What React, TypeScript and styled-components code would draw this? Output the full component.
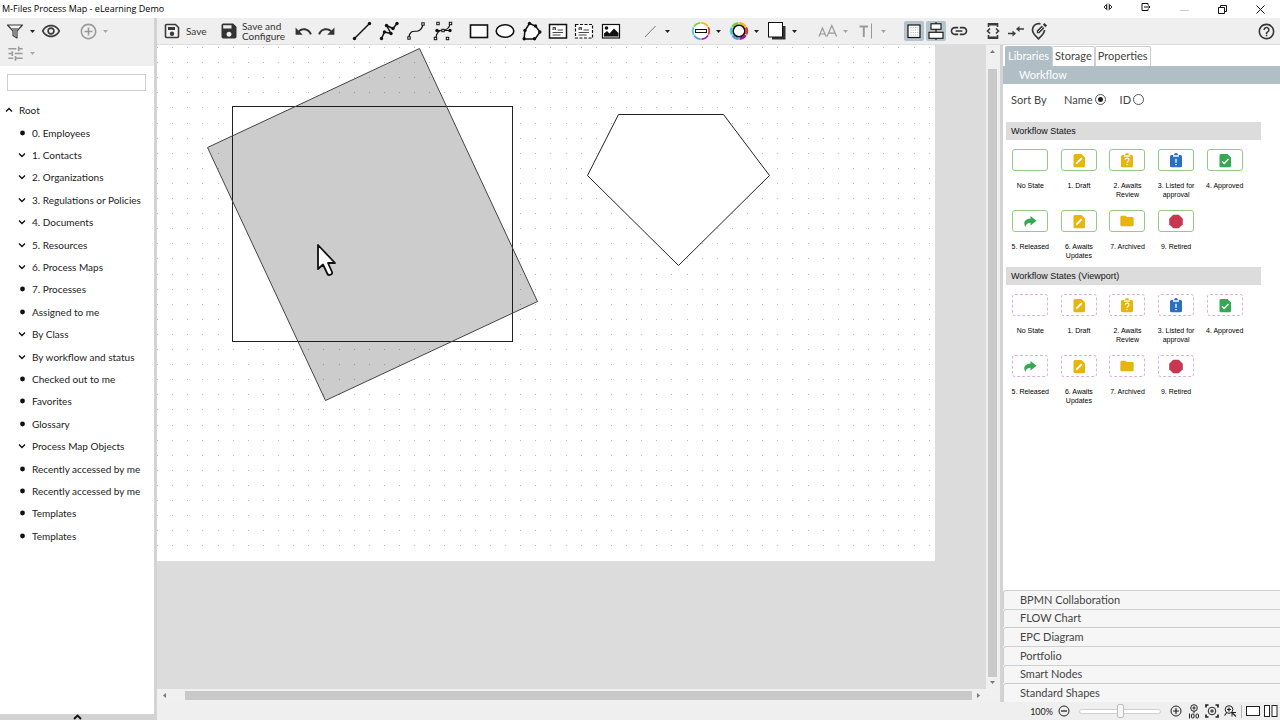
import React from "react";
import styled, { createGlobalStyle } from "styled-components";
import {
  MdOutlineRemoveRedEye,
  MdAddCircleOutline,
  MdTune,
  MdSave,
  MdUndo,
  MdRedo,
  MdLink,
  MdHelpOutline,
  MdFolder,
} from "react-icons/md";

const Global = createGlobalStyle`
  * { box-sizing: border-box; }
  html, body { margin: 0; height: 100%; }
  #root { height: 100%; }
  body { font-family: Lato, "Liberation Sans", sans-serif; color: #333; background: #fff; overflow: hidden; }
  button { font: inherit; color: inherit; border: 0; padding: 0; margin: 0; background: none; }
  svg { display: block; flex: none; }
`;

/* ---------- frame ---------- */

const Window = styled.div`
  display: flex;
  flex-direction: column;
  height: 100vh;
`;

const TitleBar = styled.header`
  flex: none;
  height: 18px;
  display: flex;
  align-items: center;
  justify-content: space-between;
  background: #fff;
`;

const Title = styled.h1`
  margin: 0;
  padding-left: 2px;
  font: 400 9px/18px "Open Sans", "Noto Sans", sans-serif;
  color: #000;
`;

const WindowButtons = styled.div`
  display: flex;
  align-items: center;
  padding-right: 1px;
`;

const WindowButton = styled.button`
  width: 38px;
  height: 16px;
  display: flex;
  align-items: center;
  justify-content: center;
  color: #111;
`;

const Body = styled.div`
  flex: 1;
  min-height: 0;
  display: flex;
`;

/* ---------- sidebar ---------- */

const Sidebar = styled.aside`
  flex: none;
  width: 157px;
  border-right: 3px solid #d3d3d3;
  display: flex;
  flex-direction: column;
`;

const SideTools = styled.div`
  flex: none;
  background: #efefef;
  height: 48px;
  padding: 2px 0 0 4px;
`;

const SideRow = styled.div`
  display: flex;
  align-items: center;
  height: 22px;
`;

const SideButton = styled.button<{ $muted?: boolean }>`
  width: 22px;
  height: 22px;
  display: flex;
  align-items: center;
  justify-content: center;
  color: ${(p) => (p.$muted ? "#9a9a9a" : "#3a3a3a")};
`;

const CaretButton = styled.button<{ $muted?: boolean }>`
  width: 12px;
  height: 22px;
  display: flex;
  align-items: center;
  justify-content: center;
  color: ${(p) => (p.$muted ? "#a8a8a8" : "#222")};
`;

const SideSpacer = styled.span<{ $w: number }>`
  width: ${(p) => p.$w}px;
`;

const Search = styled.input`
  flex: none;
  margin: 8px 8px 8px 7px;
  height: 17px;
  border: 1px solid #cfcfcf;
  background: #fff;
  padding: 0 4px;
  font: 10px Lato, sans-serif;
  outline: none;
`;

const Tree = styled.ul`
  list-style: none;
  margin: 0;
  padding: 0 0 0 17px;
  height: 448px;
  flex: none;
  display: grid;
  grid-auto-rows: 1fr;
`;

const TreeItem = styled.li<{ $root?: boolean }>`
  display: flex;
  align-items: center;
  gap: 5px;
  margin-left: ${(p) => (p.$root ? "-13px" : "0")};
  font-size: 10px;
  line-height: 14px;
  color: #222;
  white-space: nowrap;
`;

const TreeMark = styled.span`
  width: 10px;
  display: flex;
  justify-content: center;
`;

const SideFooter = styled.button`
  flex: none;
  margin-top: auto;
  height: 6px;
  width: 100%;
  background: #d3d3d3;
  display: flex;
  justify-content: center;
  color: #111;
`;

/* ---------- toolbar ---------- */

const Main = styled.main`
  flex: 1;
  min-width: 0;
  display: flex;
  flex-direction: column;
`;

const Toolbar = styled.div`
  flex: none;
  height: 27px;
  padding: 0 3px 0 7px;
  border-bottom: 1px solid #dedede;
  background: #efefef;
  display: flex;
  align-items: center;
  color: #333;
`;

const LabelButton = styled.button<{ $w: number; $gap: number }>`
  width: ${(p) => p.$w}px;
  height: 24px;
  display: flex;
  align-items: center;
  gap: ${(p) => p.$gap}px;
  font-size: 10px;
  line-height: 10px;
  text-align: left;
  white-space: pre;
`;

const ToolGroup = styled.div<{ $w: number; $gap: number }>`
  width: ${(p) => p.$w}px;
  margin-left: ${(p) => p.$gap}px;
  display: flex;
  align-items: center;
`;

const ToolButton = styled.button`
  flex: 1;
  min-width: 0;
  height: 24px;
  display: flex;
  align-items: center;
  justify-content: center;
`;

const DropTool = styled.button<{ $gap: number; $muted?: boolean }>`
  margin-left: ${(p) => p.$gap}px;
  height: 24px;
  display: grid;
  grid-template-columns: 22px 12px;
  align-items: center;
  justify-items: center;
  color: ${(p) => (p.$muted ? "#a5a5a5" : "#222")};
`;

const Toggle = styled.button`
  flex: none;
  width: 20px;
  height: 20px;
  margin-right: 2px;
  border-radius: 2px;
  background: #b4c3cc;
  display: flex;
  align-items: center;
  justify-content: center;
`;

const HelpButton = styled.button`
  width: 22px;
  height: 22px;
  margin-left: auto;
  display: flex;
  align-items: center;
  justify-content: center;
`;

/* ---------- canvas ---------- */

const Workspace = styled.div`
  flex: 1;
  min-height: 0;
  display: flex;
`;

const CanvasPane = styled.section`
  flex: 1;
  min-width: 0;
  display: grid;
  grid-template-columns: minmax(0, 1fr) 14px;
  grid-template-rows: minmax(0, 1fr) 13px;
  background: #f0f0f0;
`;

const Desk = styled.div`
  background: #dcdcdc;
  overflow: hidden;
`;

const ScrollV = styled.div`
  display: flex;
  flex-direction: column;
  align-items: center;
  padding: 4px 1px 4px 0;
  gap: 15px;
`;

const ScrollH = styled.div`
  display: flex;
  align-items: center;
  padding: 0 5px;
  gap: 18px;
`;

const ThumbV = styled.div`
  flex: 1;
  width: 9px;
  background: #c9c9c9;
  margin-bottom: -12px;
`;

const ThumbH = styled.div`
  flex: 1;
  height: 9px;
  background: #c9c9c9;
  margin-right: -14px;
`;

/* ---------- right panel ---------- */

const Panel = styled.aside`
  flex: none;
  width: 280px;
  border-left: 3px solid #d3d3d3;
  background: #fff;
  display: flex;
  flex-direction: column;
`;

const Tabs = styled.div`
  flex: none;
  height: 21px;
  padding: 1px 0 0 2px;
  display: flex;
`;

const Tab = styled.button<{ $on?: boolean }>`
  height: 20px;
  padding: 0 2px 1px;
  border: 1px solid ${(p) => (p.$on ? "#b0bec5" : "#cfcfcf")};
  border-bottom: 0;
  border-radius: 2px 2px 0 0;
  font-size: 11px;
  line-height: 18px;
  background: ${(p) => (p.$on ? "#b0bec5" : "#fff")};
  color: ${(p) => (p.$on ? "#fff" : "#444")};
`;

const OpenSection = styled.button`
  flex: none;
  height: 18px;
  padding-left: 16px;
  text-align: left;
  font-size: 11px;
  line-height: 18px;
  background: #b0bec5;
  color: #fff;
`;

const SortRow = styled.div`
  flex: none;
  display: flex;
  align-items: center;
  height: 16px;
  margin: 7px 0 15px 8px;
  font-size: 11px;
  color: #444;
`;

const SortTitle = styled.span`
  width: 53px;
`;

const RadioLabel = styled.label`
  display: flex;
  align-items: center;
  gap: 2px;
  margin-right: 14px;
`;

const Radio = styled.input`
  appearance: none;
  width: 11px;
  height: 11px;
  margin: 0;
  border: 1px solid #555;
  border-radius: 50%;
  background: #fff;
  &:checked {
    background: radial-gradient(circle, #222 0 2px, #fff 3px);
  }
`;

const Library = styled.section`
  flex: none;
  margin: 0 19px 0 3px;
`;

const LibraryTitle = styled.h2`
  margin: 0 0 9px;
  height: 18px;
  padding-left: 5px;
  background: #dcdcdc;
  font: 400 9px/18px "Liberation Sans", Arial, sans-serif;
  color: #111;
`;

const Shapes = styled.div`
  display: grid;
  grid-template-columns: repeat(5, minmax(0, 1fr));
  grid-auto-rows: 61px;
  width: 243px;
  margin-bottom: -4px;
`;

const ShapeButton = styled.button`
  display: flex;
  flex-direction: column;
  align-items: center;
  font: 400 7px/9px "Liberation Sans", Arial, sans-serif;
  color: #000;
  gap: 10px;
  white-space: pre;
`;

const ShapeBox = styled.span<{ $viewport?: boolean }>`
  width: 36px;
  height: 22px;
  border-radius: 3px;
  border: 1px ${(p) => (p.$viewport ? "dashed #dfb0df" : "solid #93cb85")};
  display: flex;
  align-items: center;
  justify-content: center;
`;

const Closed = styled.div`
  flex: none;
  margin-top: auto;
  height: 112px;
  display: grid;
  grid-auto-rows: 1fr;
`;

const ClosedSection = styled.button`
  border: 1px solid #cfcfcf;
  border-width: 1px 0 0 1px;
  border-radius: 3px 0 0 0;
  background: #f6f6f6;
  padding-left: 16px;
  text-align: left;
  font-size: 11px;
  line-height: 16px;
  color: #444;
`;

/* ---------- status bar ---------- */

const StatusBar = styled.footer`
  flex: none;
  height: 18px;
  background: #efefef;
  display: flex;
  align-items: center;
  justify-content: flex-end;
  color: #222;
  font-size: 9px;
`;

const StatusButton = styled.button`
  width: 18px;
  height: 18px;
  display: flex;
  align-items: center;
  justify-content: center;
`;

const Zoom = styled.output`
  margin-right: 2px;
`;

const Slider = styled.input`
  appearance: none;
  width: 82px;
  height: 16px;
  margin: 0 6px;
  background: none;
  &::-webkit-slider-runnable-track {
    height: 5px;
    border: 1px solid #cfcfcf;
    border-radius: 3px;
    background: #fff;
  }
  &::-webkit-slider-thumb {
    appearance: none;
    width: 7px;
    height: 14px;
    margin-top: -6px;
    border: 1px solid #bdbdbd;
    border-radius: 2px;
    background: #f6f6f6;
  }
`;

const Divider = styled.span`
  width: 1px;
  height: 13px;
  margin: 0 2px;
  background: #b5b5b5;
`;

/* ---------- icons ---------- */

const Caret = () => (
  <svg width="5" height="3" viewBox="0 0 5 3"><path d="M0 0h5L2.500 3z" fill="currentColor" /></svg>
);

const Chevron = ({ up }: { up?: boolean }) => (
  <svg width="8" height="6" viewBox="0 0 8 6" fill="none" stroke="#111" strokeWidth="1.4">
    <path d={up ? "M1 4.500 4 1.500l3 3" : "M1 1.500l3 3 3-3"} />
  </svg>
);

const Bullet = () => (
  <svg width="5" height="6" viewBox="0 0 5 6"><circle cx="2.500" cy="3" r="2.400" fill="#111" /></svg>
);

const Ico = ({ children, s = 20 }: { children: React.ReactNode; s?: number }) => (
  <svg width={s} height={s} viewBox={`0 0 ${s} ${s}`} fill="none" stroke="#111" strokeWidth="1.5">{children}</svg>
);

const FilterIcon = () => (
  <svg width="18" height="18" viewBox="0 0 18 18">
    <path d="M1.500 3h15l-5.500 6v7l-4-2.500V9z" fill="#f4f4f4" stroke="#3a3a3a" strokeWidth="1.200" strokeLinejoin="round" />
    <path d="M4.500 6h9L10.300 9v5.500L7.700 13V9z" fill="#888" />
  </svg>
);

const SaveIcon = () => (
  <svg width="16" height="16" viewBox="0 0 16 16">
    <path d="M2.500 1.500h9l3 3v9a1 1 0 0 1-1 1h-11a1 1 0 0 1-1-1v-11a1 1 0 0 1 1-1z" fill="#f4f4f4" stroke="#3a3a3a" strokeWidth="1.600" />
    <path d="M4 4h7v3H4z" fill="#3a3a3a" />
    <circle cx="8" cy="10.800" r="2.200" fill="#3a3a3a" />
  </svg>
);

const Sq = ({ x, y }: { x: number; y: number }) => (
  <rect x={x - 1.2} y={y - 1.2} width="2.400" height="2.400" fill="#fff" strokeWidth="1" />
);
const Dot = ({ x, y }: { x: number; y: number }) => <circle cx={x} cy={y} r="1.700" fill="#111" stroke="none" />;

const LineIcon = () => (
  <Ico><path d="M2 18 18 2" /><Dot x={2.500} y={17.500} /><Dot x={17.500} y={2.500} /></Ico>
);
const PolylineIcon = () => (
  <Ico>
    <path d="M2.500 17.500 5.500 11l6.500 1.500L7.500 4.500 14 7.500l4-5" strokeLinejoin="round" />
    <Dot x={2.500} y={17.500} /><Dot x={5.500} y={11} /><Dot x={12} y={12.500} /><Dot x={7.500} y={4.500} /><Dot x={14} y={7.500} /><Dot x={18} y={2.500} />
  </Ico>
);
const CurveIcon = () => (
  <Ico><path d="M3 16C4 8 9 11 12 10s4-3 5-6" strokeWidth="1.200" /><Sq x={3} y={17} /><Sq x={17} y={3} /></Ico>
);
const BezierIcon = () => (
  <Ico>
    <path d="M3 16c1-5 4-7 7-7s6-1 7-6M4 9.500h13" strokeWidth="1.200" />
    <Dot x={4} y={9.500} /><Dot x={17} y={9.500} />
    <Sq x={10} y={9.500} /><Sq x={5} y={2.500} /><Sq x={17.500} y={2.500} /><Sq x={2.500} y={17.500} /><Sq x={14.500} y={17.500} />
  </Ico>
);
const RectIcon = () => <Ico><rect x="1.500" y="4" width="17" height="12.500" fill="#fff" strokeWidth="1.600" /></Ico>;
const EllipseIcon = () => <Ico><ellipse cx="10" cy="10" rx="8.800" ry="6.300" fill="#fff" strokeWidth="1.600" /></Ico>;
const PolygonIcon = () => (
  <Ico>
    <path d="M7.500 2.500 13.500 5l4.500 6-5 7H2L3 9.500z" fill="#fff" />
    <Dot x={7.500} y={2.500} /><Dot x={13.500} y={5} /><Dot x={17.800} y={11} /><Dot x={12.500} y={17.800} /><Dot x={2.200} y={17.800} /><Dot x={3} y={9.500} />
  </Ico>
);
const TextBoxIcon = ({ dashed }: { dashed?: boolean }) => (
  <Ico>
    <rect x="1.500" y="3.500" width="17" height="13.500" fill="#fff" strokeWidth={dashed ? 1.2 : 1.5} strokeDasharray={dashed ? "3 1.500" : undefined} />
    <path d="M5 9V6.500h2.500V9M5 8h2.500M9.500 9H15M4.500 11.500H15M4.500 14h8" stroke="#333" strokeWidth=".9" />
  </Ico>
);
const ImageIcon = () => (
  <Ico>
    <rect x="1.500" y="3.500" width="17" height="13.500" fill="#fff" strokeWidth="1.200" />
    <circle cx="5.500" cy="7" r="1.800" fill="#111" stroke="none" />
    <path d="M3 15.500v-3l3-2.500 2.500 2.500L13 7.500l4.500 4.500v3.500z" fill="#111" stroke="none" />
  </Ico>
);
const ThinLineIcon = () => <Ico><path d="M5 16 15.500 5" stroke="#777" strokeWidth="1" /></Ico>;

const ring = ["#f5b623", "#e0392b", "#a3159a", "#5b9be6", "#45c7d8", "#7ccf3a"];
const Ring = ({ r, w }: { r: number; w: number }) => (
  <>
    {ring.map((c, i) => {
      const a = ((i * 60 - 88) * Math.PI) / 180;
      const b = ((i * 60 - 34) * Math.PI) / 180;
      return (
        <path key={c} stroke={c} strokeWidth={w}
          d={`M${10 + r * Math.cos(a)} ${10 + r * Math.sin(a)}A${r} ${r} 0 0 1 ${10 + r * Math.cos(b)} ${10 + r * Math.sin(b)}`} />
      );
    })}
  </>
);
const StrokeColorIcon = () => (
  <Ico><circle cx="10" cy="10" r="7.500" fill="#fff" stroke="none" /><Ring r={8.2} w={1.7} /><rect x="4.500" y="8.500" width="11" height="3" fill="#fff" strokeWidth="1" /></Ico>
);
const FillColorIcon = () => (
  <Ico><Ring r={7.8} w={2.6} /><circle cx="10" cy="10" r="5.800" fill="#fff" strokeWidth="1.500" /></Ico>
);
const ShadowIcon = () => (
  <Ico><path d="M5 5h13.500v13.500H5z" fill="#333" stroke="none" /><rect x="1.500" y="1.500" width="14" height="14.500" fill="#fff" strokeWidth="1" /></Ico>
);
const FontSizeIcon = () => (
  <Ico><path d="M1 15.500 4.500 7 8 15.500M2.200 13h4.600M9 15.500l4.800-11 4.800 11M10.600 12.200h6.400" stroke="#999" strokeWidth="1.200" /></Ico>
);
const TextStyleIcon = () => (
  <Ico><path d="M3.500 5.500H12M7.800 5.500V16" stroke="#999" strokeWidth="1.900" /><path d="M15.500 2.500v15" stroke="#999" strokeWidth="1" /></Ico>
);
const GridIcon = () => (
  <Ico s={16}><rect x="2" y="2" width="12" height="12.500" fill="#fff" strokeWidth="1.200" />
    <path d="M4.500 4.500h8M4.500 7h8M4.500 9.500h8M4.500 12h8" stroke="#999" strokeWidth=".8" strokeDasharray="1 1.300" />
  </Ico>
);
const AlignIcon = () => (
  <Ico s={18}><path d="M9 0v18" strokeWidth="1.100" /><rect x="4" y="1.800" width="10" height="5.500" fill="#fff" strokeWidth="1.100" /><rect x="2" y="10.300" width="14" height="6" fill="#fff" strokeWidth="1.100" /></Ico>
);
const DeviceIcon = () => (
  <Ico>
    <path d="M5.500 6V2.700h9V6M5.500 14v3.300h9V14M7 7.500 4.500 10 7 12.500M13 7.500l2.500 2.500-2.500 2.500" stroke="#3a3a3a" strokeWidth="1.600" />
    <path d="M5 2h10v2.500H5zM5 15.500h10V18H5z" fill="#3a3a3a" stroke="none" />
  </Ico>
);
const MergeIcon = () => (
  <Ico><path d="M2 12.500h6M18 8h-6" stroke="#3a3a3a" strokeWidth="1.500" /><path d="M6.500 9.500l3.500 3-3.500 3zM13.500 5 10 8l3.500 3z" fill="#3a3a3a" stroke="none" /></Ico>
);
const PinIcon = () => (
  <Ico>
    <path d="M11.500 2.800C6.500 2 3.500 5 3.500 9c0 3.500 3.500 6.500 6 8.800 2.500-2.300 6-5.300 6-8.800" stroke="#3a3a3a" strokeWidth="1.700" />
    <path d="M7.800 12.300V9.600l5-5 2.600 2.600-5 5z" fill="#3a3a3a" stroke="none" />
    <path d="M13.800 3.600 15.500 2l2.600 2.600-1.700 1.600z" fill="#3a3a3a" stroke="none" />
    <path d="M9.200 10.800l4.400-4.400" stroke="#efefef" strokeWidth="1" />
  </Ico>
);

type Kind = "none" | "draft" | "question" | "listed" | "approved" | "released" | "folder" | "retired";

const StateIcon = ({ kind }: { kind: Kind }) => {
  if (kind === "none") return null;
  if (kind === "folder") return <MdFolder size={16} color="#e8b50f" />;
  const file = "M3 1h6.500L13 4.500V13a1.300 1.300 0 0 1-1.300 1.300H2.800A1.300 1.300 0 0 1 1.500 13V2.500A1.500 1.500 0 0 1 3 1z";
  const clip = "M2.500 2H5a2 2 0 0 1 4 0h2.500A1.500 1.500 0 0 1 13 3.500v9.300a1.500 1.500 0 0 1-1.500 1.500h-9A1.500 1.500 0 0 1 1 12.800V3.500A1.500 1.500 0 0 1 2.500 2z";
  return (
    <svg width="14" height="15" viewBox="0 0 14 15" fill="none" stroke="#fff" strokeWidth="1.300">
      {kind === "draft" && (<><path d={file} fill="#e8b50f" stroke="none" /><path d="M4.300 10.700 9.800 5.200" strokeWidth="1.900" /></>)}
      {kind === "approved" && (<><path d={file} fill="#34a853" stroke="none" /><path d="M4 8.300l2.200 2.200L10.500 6" /></>)}
      {kind === "question" && (<><path d={clip} fill="#e8b50f" stroke="none" /><path d="M4 3h6" /><path d="M5.200 6.800c0-2.200 3.800-2.200 3.800 0 0 1.500-1.900 1.500-1.900 3M7.100 11v1.300" strokeWidth="1.100" /></>)}
      {kind === "listed" && (<><path d={clip} fill="#2a6fc0" stroke="none" /><path d="M4 3h6M7 5.800v4M7 11v1.300" /></>)}
      {kind === "released" && <path d="M7.500 2 13.500 6.700l-6 4.700V8.800C4.800 8.800 3 9.800 2.400 13-.5 8 2.500 4.700 7.500 4.700z" fill="#34a853" stroke="none" />}
      {kind === "retired" && <path d="M4.200.8h5.600l4 4v5.400l-4 4H4.200l-4-4V4.800z" fill="#c8374f" stroke="none" />}
    </svg>
  );
};

/* ---------- data ---------- */

const tree: [string, boolean][] = [
  ["0. Employees", false],
  ["1. Contacts", true],
  ["2. Organizations", true],
  ["3. Regulations or Policies", true],
  ["4. Documents", true],
  ["5. Resources", true],
  ["6. Process Maps", true],
  ["7. Processes", false],
  ["Assigned to me", false],
  ["By Class", true],
  ["By workflow and status", true],
  ["Checked out to me", false],
  ["Favorites", false],
  ["Glossary", false],
  ["Process Map Objects", true],
  ["Recently accessed by me", false],
  ["Recently accessed by me", false],
  ["Templates", false],
  ["Templates", false],
];

const states: [string, Kind][] = [
  ["No State", "none"],
  ["1. Draft", "draft"],
  ["2. Awaits\nReview", "question"],
  ["3. Listed for\napproval", "listed"],
  ["4. Approved", "approved"],
  ["5. Released", "released"],
  ["6. Awaits\nUpdates", "draft"],
  ["7. Archived", "folder"],
  ["9. Retired", "retired"],
];

const sections = ["BPMN Collaboration", "FLOW Chart", "EPC Diagram", "Portfolio", "Smart Nodes", "Standard Shapes"];

const StateLibrary = ({ title, viewport }: { title: string; viewport?: boolean }) => (
  <Library>
    <LibraryTitle>{title}</LibraryTitle>
    <Shapes>
      {states.map(([label, kind]) => (
        <ShapeButton key={label}>
          <ShapeBox $viewport={viewport}><StateIcon kind={kind} /></ShapeBox>
          {label}
        </ShapeButton>
      ))}
    </Shapes>
  </Library>
);

const gridX = Array.from({ length: 52 }, (_, i) => Math.round(i * 15.13));
const gridY = Array.from({ length: 34 }, (_, i) => Math.round(2 + i * 15.1));

const Drawing = () => (
  <svg width="778" height="516" viewBox="0 0 778 516" role="img" aria-label="Process map">
    <rect width="778" height="516" fill="#fff" />
    <path d={gridY.map((y) => gridX.map((x) => `M${x} ${y}h1v1h-1z`).join("")).join("")} fill="#bdbdbd" />
    <rect x="75.500" y="61.500" width="280" height="235" fill="#fff" stroke="#222" />
    <path d="M50.500 102.500 262.500 3.500l118 253-212 99z" fill="#000" fillOpacity=".2" stroke="#444" />
    <path d="M461.500 69.500h105l46 61-91 90-91-90z" fill="#fff" stroke="#222" />
    <path d="M161 200v24l5-4.500 4.500 9.500c1 2 5.500.5 4.500-2l-4-9h7z" fill="#fff" stroke="#111" strokeWidth="1.800" strokeLinejoin="round" />
  </svg>
);

export default function App() {
  return (
    <Window>
      <Global />
      <TitleBar>
        <Title>M-Files Process Map - eLearning Demo</Title>
        <WindowButtons>
          <WindowButton aria-label="Resize">
            <svg width="10" height="12" viewBox="0 0 10 12" fill="none" stroke="#111"><path d="M3.500 1.500v5L1 4zM6.500 1.500v5L9 4z" strokeWidth=".9" /><path d="M5 0v8" stroke="#999" /></svg>
          </WindowButton>
          <WindowButton aria-label="Exit">
            <svg width="10" height="12" viewBox="0 0 10 12" fill="none" stroke="#111"><path d="M7 2V.5H1v7h6V6M3 4h6M7.500 2.500 9 4 7.500 5.500" /></svg>
          </WindowButton>
          <WindowButton aria-label="Minimize">
            <svg width="9" height="9" viewBox="0 0 9 9"><path d="M0 5.500h9" stroke="#ccc" /></svg>
          </WindowButton>
          <WindowButton aria-label="Restore">
            <svg width="9" height="9" viewBox="0 0 9 9" fill="none" stroke="#111"><path d="M.5 2.500h6v6h-6zM2.500 2.500v-2h6v6h-2" /></svg>
          </WindowButton>
          <WindowButton aria-label="Close">
            <svg width="9" height="9" viewBox="0 0 9 9" stroke="#111"><path d="M.5.5l8 8M8.500.5l-8 8" /></svg>
          </WindowButton>
        </WindowButtons>
      </TitleBar>
      <Body>
        <Sidebar>
          <SideTools>
            <SideRow>
              <SideButton aria-label="Filter"><FilterIcon /></SideButton>
              <CaretButton aria-label="Filter options"><Caret /></CaretButton>
              <SideSpacer $w={2} />
              <SideButton aria-label="Show"><MdOutlineRemoveRedEye size={20} /></SideButton>
              <SideSpacer $w={15} />
              <SideButton $muted aria-label="Add"><MdAddCircleOutline size={19} /></SideButton>
              <CaretButton $muted aria-label="Add options"><Caret /></CaretButton>
            </SideRow>
            <SideRow>
              <SideButton $muted aria-label="Settings"><MdTune size={19} /></SideButton>
              <CaretButton $muted aria-label="Settings options"><Caret /></CaretButton>
            </SideRow>
          </SideTools>
          <Search type="text" aria-label="Search" />
          <Tree>
            <TreeItem $root><TreeMark><Chevron up /></TreeMark>Root</TreeItem>
            {tree.map(([label, expandable], i) => (
              <TreeItem key={i}>
                <TreeMark>{expandable ? <Chevron /> : <Bullet />}</TreeMark>
                {label}
              </TreeItem>
            ))}
          </Tree>
          <SideFooter aria-label="Expand panel">
            <svg width="9" height="6" viewBox="0 0 9 6" fill="none" stroke="#111" strokeWidth="1.800"><path d="M1 5l3.500-3.500L8 5" /></svg>
          </SideFooter>
        </Sidebar>
        <Main>
          <Toolbar>
            <LabelButton $w={55} $gap={6}><SaveIcon />Save</LabelButton>
            <LabelButton $w={66} $gap={3}><MdSave size={20} />{"Save and\nConfigure"}</LabelButton>
            <ToolGroup $w={46} $gap={7}>
              <ToolButton aria-label="Undo"><MdUndo size={19} /></ToolButton>
              <ToolButton aria-label="Redo"><MdRedo size={19} /></ToolButton>
            </ToolGroup>
            <ToolGroup $w={107} $gap={11}>
              <ToolButton aria-label="Line"><LineIcon /></ToolButton>
              <ToolButton aria-label="Polyline"><PolylineIcon /></ToolButton>
              <ToolButton aria-label="Curve"><CurveIcon /></ToolButton>
              <ToolButton aria-label="Bezier"><BezierIcon /></ToolButton>
            </ToolGroup>
            <ToolGroup $w={158} $gap={10}>
              <ToolButton aria-label="Rectangle"><RectIcon /></ToolButton>
              <ToolButton aria-label="Ellipse"><EllipseIcon /></ToolButton>
              <ToolButton aria-label="Polygon"><PolygonIcon /></ToolButton>
              <ToolButton aria-label="Text box"><TextBoxIcon /></ToolButton>
              <ToolButton aria-label="Text area"><TextBoxIcon dashed /></ToolButton>
              <ToolButton aria-label="Image"><ImageIcon /></ToolButton>
            </ToolGroup>
            <DropTool $gap={15} aria-label="Line style"><ThinLineIcon /><Caret /></DropTool>
            <DropTool $gap={17} aria-label="Line color"><StrokeColorIcon /><Caret /></DropTool>
            <DropTool $gap={4} aria-label="Fill color"><FillColorIcon /><Caret /></DropTool>
            <DropTool $gap={4} aria-label="Shadow"><ShadowIcon /><Caret /></DropTool>
            <DropTool $gap={17} $muted aria-label="Font size"><FontSizeIcon /><Caret /></DropTool>
            <DropTool $gap={4} $muted aria-label="Text style"><TextStyleIcon /><Caret /></DropTool>
            <ToolGroup $w={66} $gap={15}>
              <Toggle aria-pressed="true" aria-label="Grid"><GridIcon /></Toggle>
              <Toggle aria-pressed="true" aria-label="Align"><AlignIcon /></Toggle>
              <ToolButton aria-label="Link"><MdLink size={20} /></ToolButton>
            </ToolGroup>
            <ToolGroup $w={68} $gap={12}>
              <ToolButton aria-label="Developer"><DeviceIcon /></ToolButton>
              <ToolButton aria-label="Merge"><MergeIcon /></ToolButton>
              <ToolButton aria-label="Edit location"><PinIcon /></ToolButton>
            </ToolGroup>
            <HelpButton aria-label="Help"><MdHelpOutline size={19} /></HelpButton>
          </Toolbar>
          <Workspace>
            <CanvasPane>
              <Desk><Drawing /></Desk>
              <ScrollV>
                <svg width="5" height="5" viewBox="0 0 5 5"><path d="M0 4h5L2.500 1z" fill="#777" /></svg>
                <ThumbV />
                <svg width="5" height="5" viewBox="0 0 5 5"><path d="M0 1h5L2.500 4z" fill="#777" /></svg>
              </ScrollV>
              <ScrollH>
                <svg width="5" height="5" viewBox="0 0 5 5"><path d="M4 0v5L1 2.500z" fill="#777" /></svg>
                <ThumbH />
                <svg width="5" height="5" viewBox="0 0 5 5"><path d="M1 0v5l3-2.500z" fill="#777" /></svg>
              </ScrollH>
            </CanvasPane>
            <Panel>
              <Tabs role="tablist">
                <Tab $on role="tab" aria-selected="true">Libraries</Tab>
                <Tab role="tab" aria-selected="false">Storage</Tab>
                <Tab role="tab" aria-selected="false">Properties</Tab>
              </Tabs>
              <OpenSection>Workflow</OpenSection>
              <SortRow>
                <SortTitle>Sort By</SortTitle>
                <RadioLabel>Name<Radio type="radio" name="sort" defaultChecked /></RadioLabel>
                <RadioLabel>ID<Radio type="radio" name="sort" /></RadioLabel>
              </SortRow>
              <StateLibrary title="Workflow States" />
              <StateLibrary title="Workflow States (Viewport)" viewport />
              <Closed>
                {sections.map((s) => <ClosedSection key={s}>{s}</ClosedSection>)}
              </Closed>
            </Panel>
          </Workspace>
          <StatusBar>
            <Zoom>100%</Zoom>
            <StatusButton aria-label="Zoom out">
              <svg width="12" height="12" viewBox="0 0 12 12" fill="none" stroke="#222"><circle cx="6" cy="6" r="5" /><path d="M3 6h6" strokeWidth="1.300" /></svg>
            </StatusButton>
            <Slider type="range" min="0" max="100" defaultValue="51" aria-label="Zoom" />
            <StatusButton aria-label="Zoom in">
              <svg width="12" height="12" viewBox="0 0 12 12" fill="none" stroke="#222"><circle cx="6" cy="6" r="5" /><path d="M3 6h6M6 3v6" strokeWidth="1.200" /></svg>
            </StatusButton>
            <StatusButton aria-label="Zoom to 100">
              <svg width="14" height="15" viewBox="0 0 14 15" fill="none" stroke="#222"><circle cx="7" cy="4" r="3.300" /><path d="M5.300 4h3.400M7 2.300v3.400M7 7.300v2M2.500 9.500v5" /><rect x="4.500" y="10" width="2.500" height="4" rx="1" /><rect x="9" y="10" width="2.500" height="4" rx="1" /></svg>
            </StatusButton>
            <StatusButton aria-label="Zoom to fit">
              <svg width="14" height="14" viewBox="0 0 14 14" fill="none" stroke="#222"><circle cx="7" cy="7" r="3.800" /><path d="M5 7h4M7 5v4" /><path d="M1 3.500V1h2.500M10.500 1H13v2.500M13 10.500V13h-2.500M3.500 13H1v-2.500" strokeWidth="1.700" /></svg>
            </StatusButton>
            <StatusButton aria-label="Zoom to selection">
              <svg width="14" height="14" viewBox="0 0 14 14" fill="none" stroke="#222"><circle cx="6" cy="5.500" r="3.800" /><path d="M4 5.500h4M6 3.500v4M9 8.500l4 4M3.500 9 1.500 11.500" strokeWidth="1.200" /><path d="M9 12.500v-4h4" strokeWidth="1" /></svg>
            </StatusButton>
            <Divider />
            <StatusButton aria-label="Single view">
              <svg width="14" height="12" viewBox="0 0 14 12"><rect x=".5" y="1.500" width="13" height="9" fill="#fff" stroke="#222" /></svg>
            </StatusButton>
            <StatusButton aria-label="Split view">
              <svg width="14" height="12" viewBox="0 0 14 12" fill="#fff" stroke="#222"><rect x=".5" y=".5" width="5" height="11" /><rect x="8" y=".5" width="5" height="11" /></svg>
            </StatusButton>
          </StatusBar>
        </Main>
      </Body>
    </Window>
  );
}
